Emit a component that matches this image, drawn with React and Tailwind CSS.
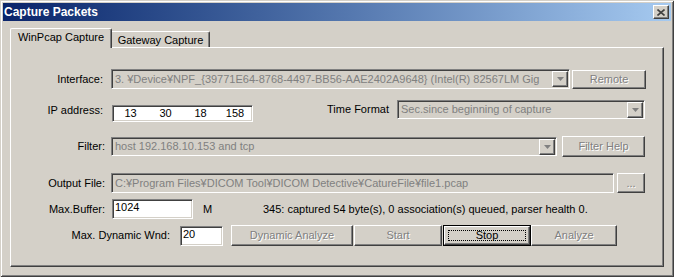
import React from "react";

// Win2000 style bevels
const sunken =
  "border border-t-[#808080] border-l-[#808080] border-r-white border-b-white shadow-[inset_1px_1px_#404040,inset_-1px_-1px_#D4D0C8]";
const raised =
  "border border-t-white border-l-white border-r-[#404040] border-b-[#404040] shadow-[inset_-1px_-1px_#808080,inset_1px_1px_#D4D0C8]";
const grayText = "text-[#808080] [text-shadow:1px_1px_0_#fff]";

const DropButton = () => (
  <div className={`${raised} w-[16px] h-[16px] flex items-center justify-center bg-[#D4D0C8] shrink-0`}>
    <svg width="7" height="4" viewBox="0 0 7 4">
      <polygon points="0,0 7,0 3.5,4" fill="#808080" />
    </svg>
  </div>
);

const Combo = ({ text, className }) => (
  <div className={`${sunken} ${className} p-[1px] flex items-center bg-[#D4D0C8] overflow-hidden`}>
    <span className="flex-1 min-w-0 pl-[2px] overflow-hidden whitespace-nowrap text-[#808080]">{text}</span>
    <DropButton />
  </div>
);

const Button = ({ label, className, disabled = true, isDefault = false }) => {
  if (isDefault) {
    return (
      <div className={`${className} border border-black`}>
        <div className={`${raised} w-full h-full p-[3px]`}>
          <div className="w-full h-full border border-dotted border-black flex items-center justify-center text-black">
            {label}
          </div>
        </div>
      </div>
    );
  }
  return (
    <div className={`${raised} ${className} flex items-center justify-center ${disabled ? grayText : "text-black"}`}>
      {label}
    </div>
  );
};

const Label = ({ children, className }) => (
  <div className={`${className} text-right whitespace-nowrap text-black shrink-0`}>{children}</div>
);

const App = () => {
  return (
    <div className="w-[674px] h-[277px] bg-[#D4D0C8] p-[3px] shadow-[inset_1px_1px_#D4D0C8,inset_-1px_-1px_#404040,inset_2px_2px_#ffffff,inset_-2px_-2px_#808080] font-['Liberation_Sans',Arial,sans-serif] text-[11px] leading-[13px] select-none">
      {/* title bar */}
      <div className="h-[18px] bg-linear-to-r from-[#0A246A] to-[#A6CAF0] flex items-center justify-between pl-[1px] pr-[2px]">
        <span className="text-white font-bold text-[12px]">Capture Packets</span>
        <div className={`${raised} w-[16px] h-[14px] bg-[#D4D0C8] flex items-center justify-center`}>
          <svg width="8" height="7" viewBox="0 0 8 7">
            <path d="M0.5 0.5 L7.5 6.5 M7.5 0.5 L0.5 6.5" stroke="#404040" strokeWidth="1.6" />
          </svg>
        </div>
      </div>

      {/* tabs */}
      <div className="flex items-end h-[26px] pl-[7px]">
        <div className="relative z-10 h-[20px] w-[102px] mb-[-1px] bg-[#D4D0C8] border-t border-l border-t-white border-l-white border-r border-r-[#404040] rounded-t-[2px] shadow-[inset_-1px_0_#808080] flex items-start justify-center pt-[2px]">
          WinPcap Capture
        </div>
        <div className="h-[16px] w-[98px] border-t border-t-white border-r border-r-[#404040] rounded-tr-[2px] shadow-[inset_-1px_0_#808080] flex items-start justify-center pt-[2px]">
          Gateway Capture
        </div>
      </div>

      {/* tab panel */}
      <div className="mx-[7px] h-[220px] border-t border-l border-t-white border-l-white border-r border-b border-r-[#404040] border-b-[#404040] shadow-[inset_-1px_-1px_#808080] flex flex-col">
        {/* Interface */}
        <div className="flex items-center h-[20px] mt-[21px]">
          <Label className="w-[92px] mr-[8px]">Interface:</Label>
          <Combo
            className="w-[459px] h-[20px]"
            text="3. ¥Device¥NPF_{39771E64-8768-4497-BB56-AAE2402A9648} (Intel(R) 82567LM Gig"
          />
          <Button label="Remote" className="ml-[2px] w-[74px] h-[19px]" />
        </div>

        {/* IP address / Time Format */}
        <div className="flex items-start h-[22px] mt-[11px]">
          <Label className="w-[92px] mr-[9px] mt-[4px]">IP address:</Label>
          <div className={`${sunken} w-[141px] h-[17px] mt-[5px] bg-white flex items-center text-black`}>
            <span className="w-[35px] text-center">13</span>
            <span className="w-[35px] text-center">30</span>
            <span className="w-[35px] text-center">18</span>
            <span className="w-[34px] text-center">158</span>
          </div>
          <Label className="w-[136px] mr-[8px] mt-[3px]">Time Format</Label>
          <Combo className="w-[248px] h-[19px]" text="Sec.since beginning of capture" />
        </div>

        {/* Filter */}
        <div className="flex items-center h-[21px] mt-[14px]">
          <Label className="w-[94px] mr-[6px]">Filter:</Label>
          <Combo className="w-[446px] h-[19px]" text="host 192.168.10.153 and tcp" />
          <Button label="Filter Help" className="ml-[5px] w-[83px] h-[21px]" />
        </div>

        {/* Output File */}
        <div className="flex items-center h-[20px] mt-[16px]">
          <Label className="w-[94px] mr-[6px]">Output File:</Label>
          <div className={`${sunken} w-[503px] h-[20px] bg-[#D4D0C8] flex items-center pl-[3px] text-[#808080] whitespace-nowrap overflow-hidden`}>
            C:¥Program Files¥DICOM Tool¥DICOM Detective¥CatureFile¥file1.pcap
          </div>
          <Button label="..." className="ml-[3px] w-[28px] h-[20px]" />
        </div>

        {/* Max.Buffer */}
        <div className="flex items-center h-[20px] mt-[6px]">
          <Label className="w-[94px] mr-[7px]">Max.Buffer:</Label>
          <div className={`${sunken} w-[81px] h-[20px] bg-white pl-[2px] pt-[1px] text-black`}>1024</div>
          <span className="ml-[10px] w-[60px]">M</span>
          <span className="whitespace-nowrap">345: captured 54 byte(s), 0 association(s) queued, parser health 0.</span>
        </div>

        {/* Max. Dynamic Wnd */}
        <div className="flex items-center h-[21px] mt-[6px]">
          <Label className="w-[159px] mr-[10px]">Max. Dynamic Wnd:</Label>
          <div className={`${sunken} w-[43px] h-[20px] bg-white pl-[2px] pt-[1px] text-black`}>20</div>
          <Button label="Dynamic Analyze" className="ml-[8px] w-[122px] h-[21px]" />
          <Button label="Start" className="ml-[1px] w-[88px] h-[21px]" />
          <Button label="Stop" className="ml-[1px] w-[88px] h-[21px]" isDefault />
          <Button label="Analyze" className="w-[86px] h-[21px]" />
        </div>
      </div>
    </div>
  );
};

export default App;
